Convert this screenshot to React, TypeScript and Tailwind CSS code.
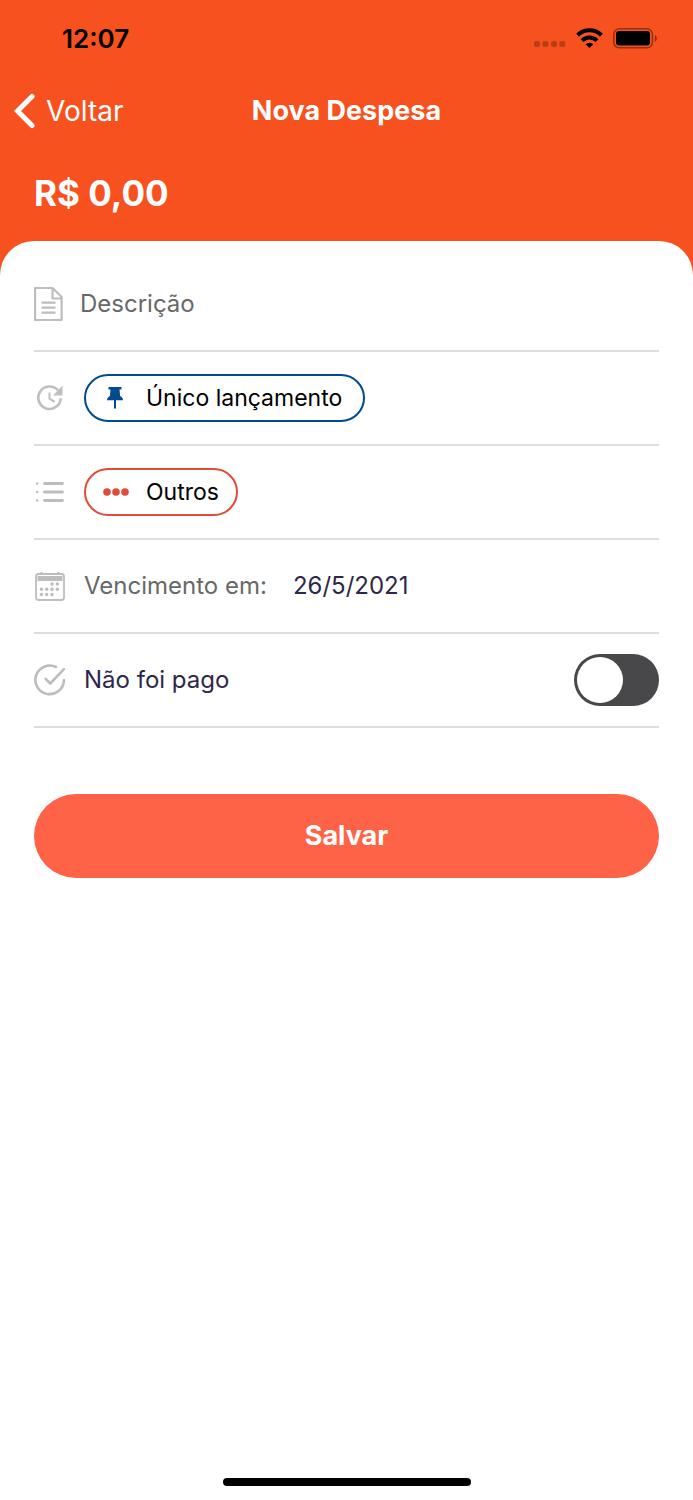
import { useState } from "react";
import type { ReactNode } from "react";

function SignalDots() {
  return (
    <svg width="32" height="6" viewBox="0 0 32 6" fill="#000" fillOpacity="0.24" aria-hidden="true">
      <rect x="0" y="0" width="6" height="6" rx="2" />
      <rect x="8.5" y="0" width="6" height="6" rx="2" />
      <rect x="17" y="0" width="6" height="6" rx="2" />
      <rect x="25.3" y="0" width="6" height="6" rx="2" />
    </svg>
  );
}

function WifiIcon() {
  return (
    <svg width="27" height="20" viewBox="0 0 27 20" fill="none" stroke="#000" strokeWidth="4" aria-hidden="true">
      <path d="M1.600 7.200a17 17 0 0 1 23.800 0" />
      <path d="M6 12.600a10.600 10.600 0 0 1 15 0" />
      <path d="M13.500 20 9.700 16.200a5.400 5.400 0 0 1 7.600 0z" fill="#000" stroke="none" />
    </svg>
  );
}

function BatteryIcon() {
  return (
    <svg width="44" height="21" viewBox="0 0 44 21" aria-hidden="true">
      <rect x="0.8" y="0.8" width="38.600" height="19" rx="5.500" fill="none" stroke="#000" strokeOpacity="0.4" strokeWidth="1.500" />
      <rect x="3" y="3" width="34" height="14.600" rx="3" fill="#000" />
      <path d="M41.800 7v7c1.500-.7 2-2 2-3.500s-.5-2.800-2-3.500z" fill="#000" fillOpacity="0.4" />
    </svg>
  );
}

function BackIcon() {
  return (
    <svg width="22" height="36" viewBox="0 0 22 36" fill="none" stroke="#fff" strokeWidth="5" strokeLinecap="round" strokeLinejoin="miter" aria-hidden="true">
      <path d="M18 3.500 3.500 18 18 32.500" />
    </svg>
  );
}

function DocumentIcon() {
  return (
    <svg width="30" height="36" viewBox="0 0 30 36" fill="none" stroke="#bdbdbd" strokeWidth="2.200" strokeLinejoin="round" aria-hidden="true">
      <path d="M1.100 2H18.500L27.600 11V34H1.100z" />
      <path d="M18.500 2v10.500H28" />
      <path d="M7.500 16.600h14M7.500 21.600h14M7.500 26.600h14" />
    </svg>
  );
}

function RepeatIcon() {
  return (
    <svg width="26" height="26" viewBox="0 0 26 26" fill="none" stroke="#bfbfbf" aria-hidden="true">
      <path d="M20.800 5.200A11.200 11.200 0 1 0 23.700 13.200" strokeWidth="2.600" />
      <path d="M25.500 0.500v10h-9.500z" fill="#bfbfbf" stroke="none" />
      <path d="M12.500 7.500v6.200l5.200 3.200" strokeWidth="2" />
    </svg>
  );
}

function ListIcon() {
  return (
    <svg width="30" height="22" viewBox="0 0 30 22" fill="none" stroke="#bdbdbd" strokeWidth="2.800" strokeLinecap="round" aria-hidden="true">
      <path d="M9.500 2.500h18M9.500 11h18M9.500 19.500h18" />
      <path d="M2.200 2.500h.01M2.200 11h.01M2.200 19.500h.01" strokeWidth="2.600" />
    </svg>
  );
}

function CalendarIcon() {
  const dots = [
    [17, 12], [22.300, 12],
    [6.500, 17.200], [11.700, 17.200], [17, 17.200], [22.300, 17.200],
    [6.500, 22.500], [11.700, 22.500], [17, 22.500],
  ];

  return (
    <svg width="30" height="29" viewBox="0 0 30 29" fill="#bdbdbd" aria-hidden="true">
      <rect x="1" y="2" width="28" height="26" rx="2.500" fill="none" stroke="#bdbdbd" strokeWidth="1.800" />
      <path d="M2.500 4h25v5h-25zM5.500 0h2v2h-2zM22.500 0h2v2h-2z" />
      {dots.map(([x, y]) => (
        <circle key={`${x}-${y}`} cx={x} cy={y} r="1.700" />
      ))}
    </svg>
  );
}

function CheckIcon() {
  return (
    <svg width="32" height="32" viewBox="0 0 32 32" fill="none" stroke="#bdbdbd" strokeWidth="2.600" strokeLinecap="round" strokeLinejoin="round" aria-hidden="true">
      <path d="M22 3A14.300 14.300 0 1 0 30 16" />
      <path d="M11.700 14.800 16.200 19.500 30 5.200" />
    </svg>
  );
}

function PinIcon() {
  return (
    <svg width="16" height="22" viewBox="0 0 16 22" fill="#004a8f" aria-hidden="true">
      <path d="M1.500 0h13v2.400h-2l.6 6.600c1.700.8 2.900 2.200 2.900 4.200H0C0 11.200 1.200 9.800 2.900 9l.6-6.600h-2z" />
      <path d="M7 12.500h2v8.500l-1 1-1-1z" />
    </svg>
  );
}

function DotsIcon() {
  return (
    <svg width="26" height="8" viewBox="0 0 26 8" fill="#e04b3a" aria-hidden="true">
      <circle cx="4" cy="4" r="3.800" />
      <circle cx="13" cy="4" r="3.800" />
      <circle cx="22" cy="4" r="3.800" />
    </svg>
  );
}

function Row({ icon, children }: { icon: ReactNode; children: ReactNode }) {
  return (
    <div className="flex h-[94px] items-center border-b-2 border-[#dedede]">
      <span className="flex w-[50px] shrink-0 justify-center pr-[18px]">{icon}</span>
      {children}
    </div>
  );
}

export default function App() {
  const [description, setDescription] = useState("");
  const [paid, setPaid] = useState(false);

  return (
    <div className="flex min-h-screen flex-col bg-[#f6511e] font-['Inter','Liberation_Sans',sans-serif] text-[24px]">
      <div className="flex h-[76px] items-center justify-between pr-9 pl-[62px]">
        <span className="text-[26px] font-semibold text-black">12:07</span>
        <div className="flex items-center gap-2.5">
          <span className="pt-3">
            <SignalDots />
          </span>
          <WifiIcon />
          <BatteryIcon />
        </div>
      </div>

      <header className="text-white">
        <div className="grid h-[70px] grid-cols-3 items-center px-3.5">
          <button type="button" className="flex items-center gap-2.5 text-[28px]">
            <BackIcon />
            Voltar
          </button>
          <h1 className="text-center text-[27px] font-bold whitespace-nowrap">Nova Despesa</h1>
        </div>
        <p className="flex h-[95px] items-center px-[34px] text-[35px] font-bold">R$ 0,00</p>
      </header>

      <main className="flex flex-1 flex-col rounded-t-[34px] bg-white px-[34px] pt-[17px]">
        <form className="flex flex-col" onSubmit={(e) => e.preventDefault()}>
          <div className="flex h-[94px] items-center gap-4 border-b-2 border-[#dedede]">
            <DocumentIcon />
            <input
              type="text"
              aria-label="Descrição"
              placeholder="Descrição"
              value={description}
              onChange={(e) => setDescription(e.target.value)}
              className="min-w-0 flex-1 text-[#2e2749] outline-none placeholder:text-[#686868]"
            />
          </div>

          <Row icon={<RepeatIcon />}>
            <button type="button" className="flex h-12 items-center rounded-full border-2 border-[#004a8f] px-[21px] text-[23px] text-black">
              <PinIcon />
              <span className="ml-[23px]">Único lançamento</span>
            </button>
          </Row>

          <Row icon={<ListIcon />}>
            <button type="button" className="flex h-12 items-center rounded-full border-2 border-[#e04b3a] px-[17px] text-[23px] text-black">
              <DotsIcon />
              <span className="ml-[17px]">Outros</span>
            </button>
          </Row>

          <Row icon={<CalendarIcon />}>
            <span className="text-[#686868]">Vencimento em:</span>
            <button type="button" className="ml-[26px] text-[#2e2749]">26/5/2021</button>
          </Row>

          <Row icon={<CheckIcon />}>
            <label htmlFor="paid" className="flex-1 text-[#2e2749]">
              {paid ? "Foi pago" : "Não foi pago"}
            </label>
            <input
              id="paid"
              type="checkbox"
              role="switch"
              checked={paid}
              onChange={(e) => setPaid(e.target.checked)}
              className="flex h-[52px] w-[85px] cursor-pointer appearance-none items-center rounded-full bg-[#48484a] px-[3px] before:size-[46px] before:rounded-full before:bg-white checked:justify-end checked:bg-[#34c759]"
            />
          </Row>

          <button type="submit" className="mt-[66px] h-[84px] rounded-full bg-[#ff6347] text-[27px] font-bold text-white">
            Salvar
          </button>
        </form>

        <div className="mx-auto mt-auto mb-3.5 h-2 w-[248px] rounded-full bg-black" />
      </main>
    </div>
  );
}
